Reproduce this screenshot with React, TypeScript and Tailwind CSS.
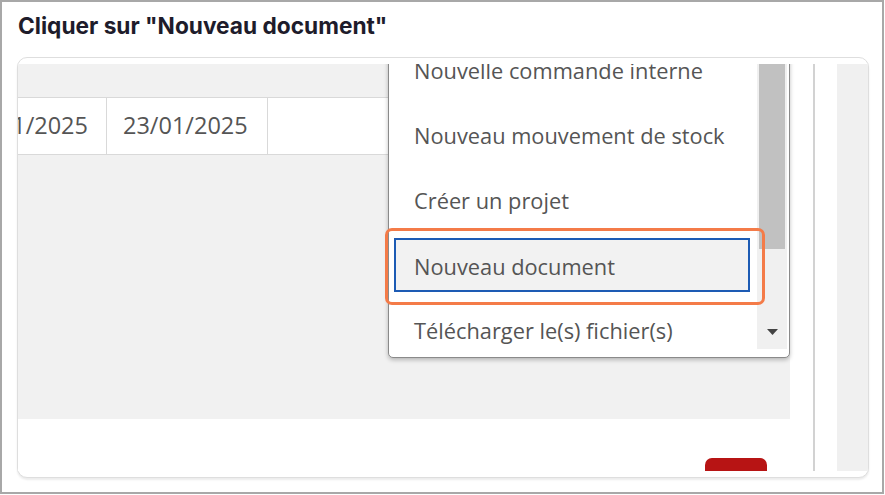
const menuItems = [
  "Nouvelle commande interne",
  "Nouveau mouvement de stock",
  "Créer un projet",
  "Nouveau document",
  "Télécharger le(s) fichier(s)",
]

export default function App() {
  return (
    <div className="relative h-[494px] w-[884px] overflow-hidden border-2 border-[#a8a8a8] bg-white font-['Open_Sans',sans-serif]">
      {/* Title */}
      <div className="h-[55px] pt-[9px] pl-[16px]">
        <h1 className="font-['Inter',sans-serif] text-[22.7px] leading-[30px] font-bold text-[#1e1c2b]">
          Cliquer sur "Nouveau document"
        </h1>
      </div>

      {/* Card */}
      <div className="ml-[15px] w-[852px] rounded-[10px] border border-[#dedede] bg-white py-[6px] shadow-[0_2px_2px_rgba(0,0,0,0.08)]">
        <div className="relative flex h-[407px] overflow-hidden">
          {/* Grid area */}
          <div className="flex w-[772px] flex-col">
            <div className="h-[355px] shrink-0 bg-[#f1f1f1]">
              <div className="h-[34px] border-b border-[#d9d9d9]" />
              <div className="flex h-[57px] border-b border-[#d9d9d9] bg-white text-[23.5px] text-[#555]">
                <div className="flex w-[89px] items-center justify-end overflow-hidden border-r border-[#d9d9d9] pr-[18px]">
                  <span className="whitespace-nowrap">23/01/2025</span>
                </div>
                <div className="flex w-[161px] items-center border-r border-[#d9d9d9] pl-[16px] whitespace-nowrap">
                  23/01/2025
                </div>
                <div className="flex-1" />
              </div>
            </div>
            <div className="flex-1 bg-white">
              <div className="mt-[39px] ml-[687px] h-[30px] w-[62px] rounded-[7px] bg-[#b71414]" />
            </div>
          </div>

          {/* Right side */}
          <div className="w-[23px] bg-white" />
          <div className="w-[2px] bg-[#d2d2d2]" />
          <div className="w-[22px] bg-white" />
          <div className="w-[31px] bg-[#f0f0f0]" />

          {/* Dropdown */}
          <div className="absolute top-[-26px] left-[370px] h-[320px] w-[402px] overflow-hidden rounded-b-[5px] border border-[#8a8a8a] bg-white shadow-[0_2px_4px_rgba(0,0,0,0.25)]">
            <div className="w-[368px]">
              {menuItems.map((item, i) =>
                i === 3 ? (
                  <div key={item} className="h-[65px] pt-[4px] pl-[5px]">
                    <div className="flex h-[54px] w-[356px] items-center border-2 border-[#1d5bb4] bg-[#f2f2f2] pt-[5px] pl-[18px] text-[21.8px] whitespace-nowrap text-[#555]">
                      {item}
                    </div>
                  </div>
                ) : (
                  <div key={item} className="flex h-[65px] items-center pl-[25px] text-[21.8px] whitespace-nowrap text-[#555]">
                    {item}
                  </div>
                ),
              )}
            </div>

            {/* Scrollbar */}
            <div className="absolute top-0 right-[2px] bottom-[8px] flex w-[30px] flex-col bg-[#f0f0f0]">
              <div className="mx-[2px] h-[210px] bg-[#c1c1c1]" />
              <div className="flex flex-1 items-end justify-center pb-[14px]">
                <svg width="11" height="6" viewBox="0 0 11 6">
                  <path d="M0 0 L11 0 L5.5 6 Z" fill="#444" />
                </svg>
              </div>
            </div>
          </div>
        </div>
      </div>

      {/* Annotation */}
      <div className="absolute top-[226px] left-[383px] h-[77px] w-[380px] rounded-[7px] border-[3px] border-[#f47b48]" />
    </div>
  )
}
